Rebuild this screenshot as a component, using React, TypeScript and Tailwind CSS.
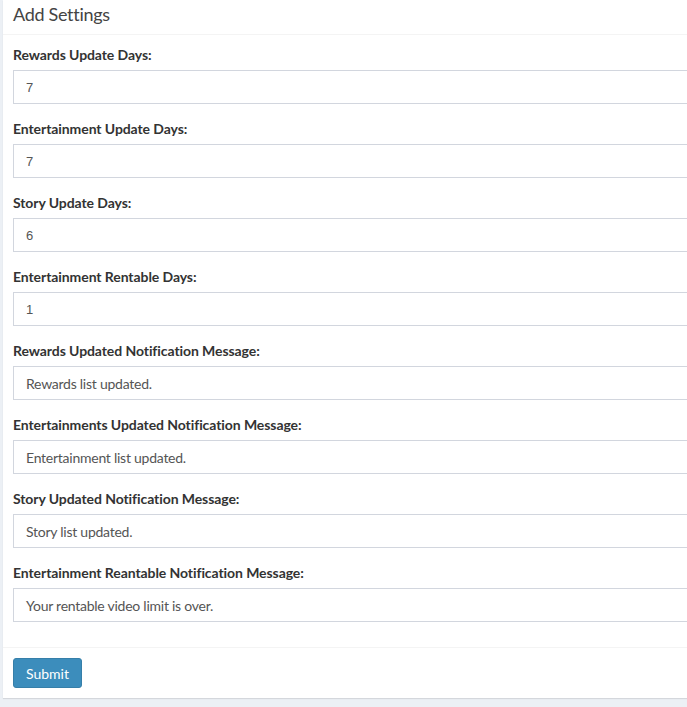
const fields = [
  { id: "rewardsDays", label: "Rewards Update Days:", value: "7", numeric: true },
  { id: "entDays", label: "Entertainment Update Days:", value: "7", numeric: true },
  { id: "storyDays", label: "Story Update Days:", value: "6", numeric: true },
  { id: "rentDays", label: "Entertainment Rentable Days:", value: "1", numeric: true },
  { id: "rewardsMsg", label: "Rewards Updated Notification Message:", value: "Rewards list updated." },
  { id: "entMsg", label: "Entertainments Updated Notification Message:", value: "Entertainment list updated." },
  { id: "storyMsg", label: "Story Updated Notification Message:", value: "Story list updated." },
  { id: "rentMsg", label: "Entertainment Reantable Notification Message:", value: "Your rentable video limit is over." },
];

export default function App() {
  return (
    <div className="h-[707px] w-[687px] overflow-hidden bg-[#ecf0f5] pl-[3px] font-['Lato','Open_Sans',sans-serif]">
      <div className="w-[720px] bg-white shadow-[0_1px_1px_rgba(0,0,0,0.1)]">
        {/* header */}
        <div className="h-[35px] border-b border-[#f4f4f4] px-[10px] pt-[3px]">
          <h3 className="text-[18px] leading-[22px] tracking-[-0.3px] text-[#444]">Add Settings</h3>
        </div>

        {/* body */}
        <div className="px-[10px] pt-[10px] pb-[10px]">
          {fields.map((f) => (
            <div key={f.id} className="mb-[15px]">
              <label className="mb-[5px] block text-[14px] font-bold leading-[20px] tracking-[-0.08px] text-[#333]">
                {f.label}
              </label>
              <div
                className={`flex h-[34px] items-center border border-[#d2d6de] px-[12px] pt-px text-[#555] ${
                  f.numeric
                    ? "font-['Liberation_Sans',sans-serif] text-[13px]"
                    : "text-[14px] tracking-[-0.25px]"
                }`}
              >
                {f.value}
              </div>
            </div>
          ))}
        </div>

        {/* footer */}
        <div className="border-t border-[#f4f4f4] p-[10px]">
          <button
            type="button"
            className="h-[30px] w-[69px] rounded-[3px] border border-[#367fa9] bg-[#3c8dbc] text-[14px] text-white"
          >
            Submit
          </button>
        </div>
      </div>
    </div>
  );
}
